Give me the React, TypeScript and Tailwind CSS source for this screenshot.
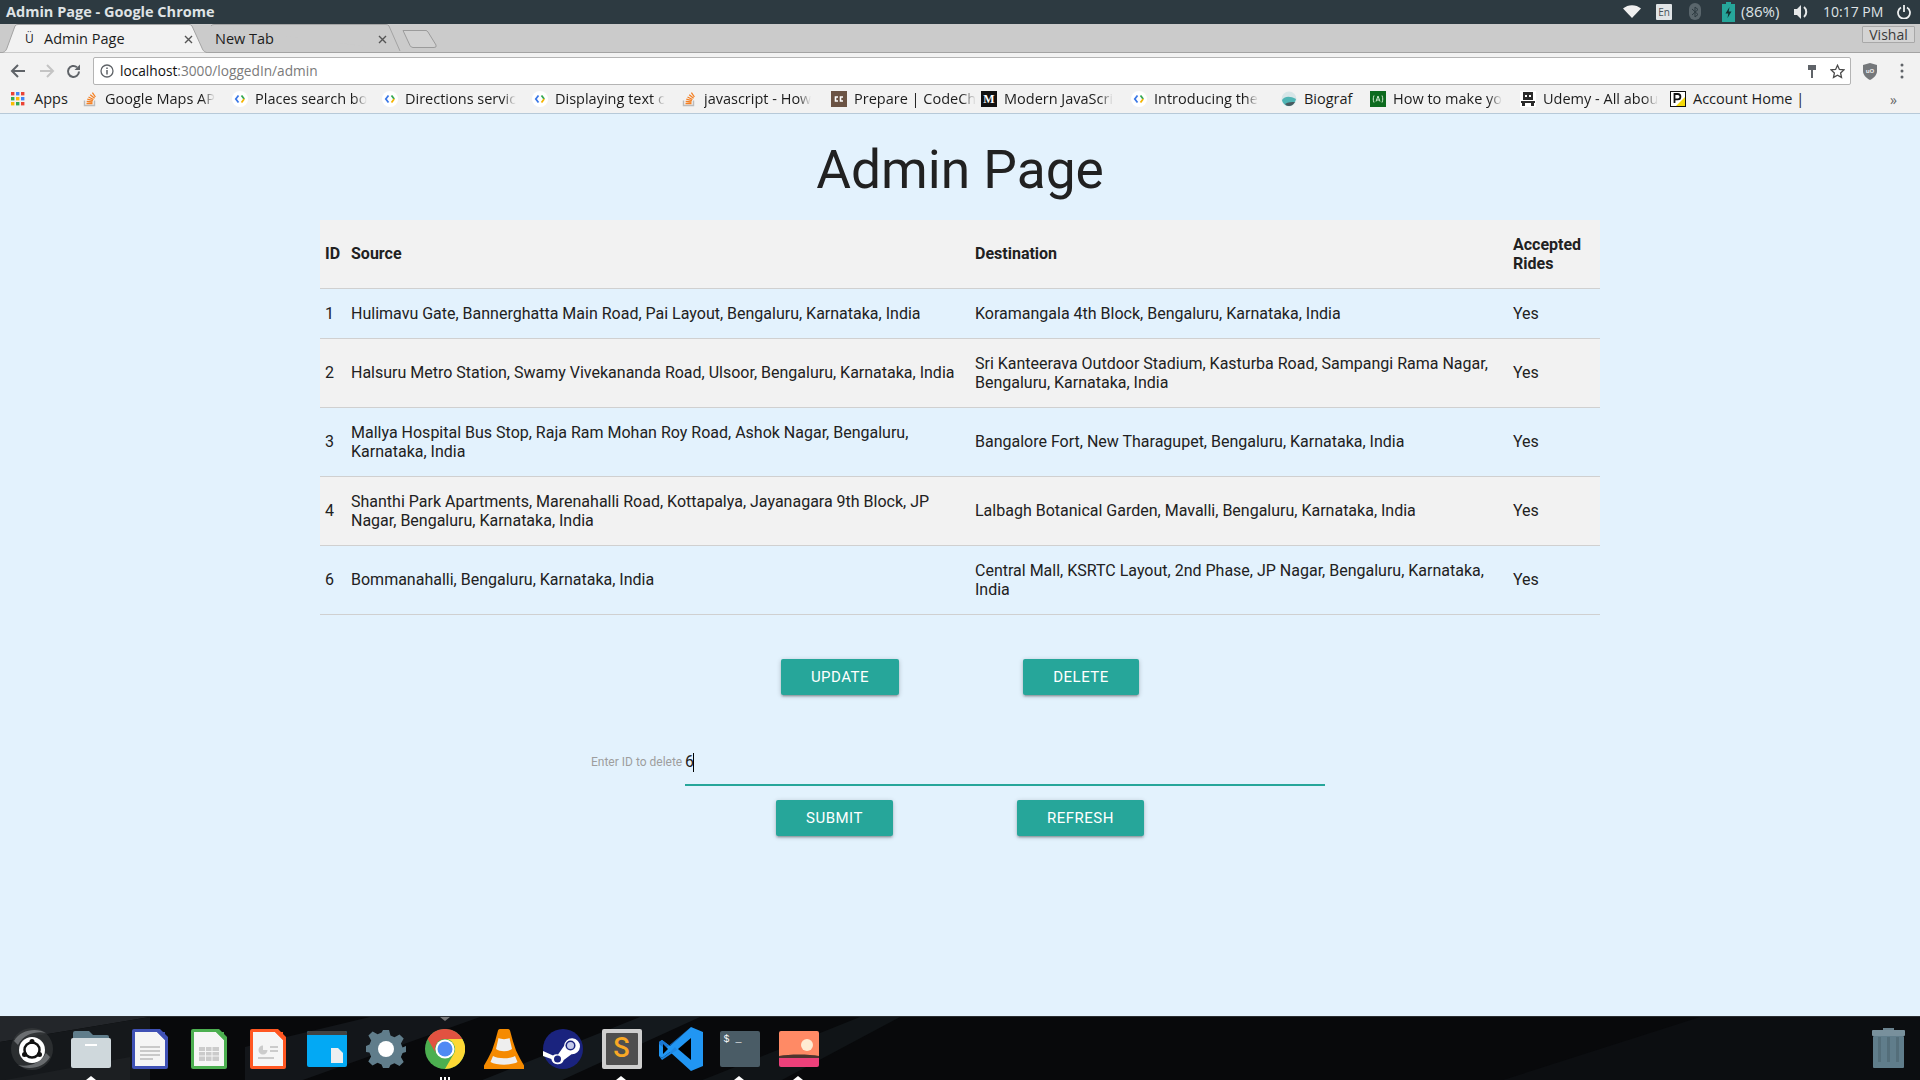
import React from "react";

const Goog = () => (
  <svg width="16" height="16" viewBox="0 0 16 16" className="shrink-0">
    <circle cx="8" cy="8" r="8" fill="#fff" />
    <path d="M6.500 4.500 L3.800 8 L6.500 11.500" fill="none" stroke="#3b78e7" strokeWidth="1.800" />
    <path d="M9.500 4.500 L12.200 8" fill="none" stroke="#34a853" strokeWidth="1.800" />
    <path d="M12.200 8 L9.500 11.500" fill="none" stroke="#f4b400" strokeWidth="1.800" />
  </svg>
);
const SO = () => (
  <svg width="16" height="16" viewBox="0 0 16 16" className="shrink-0">
    <path d="M2.500 9.500v5h10v-5" fill="none" stroke="#bcbbbb" strokeWidth="1.400" />
    <path d="M4.500 12.500h6M4.700 10.400l5.800.6M5.300 8.200l5.600 1.500M6.500 6l5 2.500M8.200 3.800l4.400 3.400M10.400 1.600l3 4.400" stroke="#f48024" strokeWidth="1.300" fill="none" />
  </svg>
);
const CC = () => (
  <svg width="16" height="16" viewBox="0 0 16 16" className="shrink-0">
    <rect width="16" height="16" fill="#6b5344" />
    <path d="M7 6H4.500v4H7M12 6H9.500v4H12" fill="none" stroke="#fff" strokeWidth="1.600" />
  </svg>
);
const MM = () => (
  <div className="w-4 h-4 shrink-0 bg-[#111] text-white flex items-center justify-center text-[12px] font-bold font-['Liberation_Serif',serif]">M</div>
);
const Bio = () => (
  <svg width="16" height="16" viewBox="0 0 16 16" className="shrink-0">
    <circle cx="8" cy="8" r="7.500" fill="#d7e6e8" />
    <path d="M1 9c3-4 8-4 14-1-1 4-4 7-7 7-3 0-6-2-7-6z" fill="#4fb4b4" />
    <path d="M4 13c3-2 7-2 10-2-2 3-4 4-6 4s-3-1-4-2z" fill="#4a5a60" />
  </svg>
);
const HowIcon = () => (
  <svg width="16" height="16" viewBox="0 0 16 16" className="shrink-0">
    <rect width="16" height="16" fill="#0d6b1f" />
    <path d="M4 4.500C3 7 3 9 4 11.500M12 4.500c1 2.500 1 4.500 0 7M6 10.500 8 5l2 5.500M6.800 9h2.400" fill="none" stroke="#cfe8cf" strokeWidth="1" />
  </svg>
);
const Ud = () => (
  <svg width="16" height="16" viewBox="0 0 16 16" className="shrink-0">
    <rect width="16" height="16" fill="#fff" />
    <path d="M3 1h10v8H3zM1 10h14v2H1zM2 12h3v3H2zM11 12h3v3h-3z" fill="#2a2a2a" />
    <rect x="5" y="4" width="2" height="2" fill="#fff" />
    <rect x="9" y="4" width="2" height="2" fill="#fff" />
  </svg>
);
const PIcon = () => (
  <svg width="16" height="16" viewBox="0 0 16 16" className="shrink-0">
    <rect x=".5" y=".5" width="15" height="15" fill="#fff" stroke="#111" />
    <path d="M15 6v9H6z" fill="#f5d90a" />
    <path d="M4.500 12V3h3.200a2.500 2.500 0 0 1 0 5.400H4.500" fill="none" stroke="#111" strokeWidth="1.800" />
  </svg>
);
const Apps = () => (
  <svg width="14" height="14" viewBox="0 0 14 14" className="shrink-0">
    {[
      [0, 0, "#ea4335"], [5, 0, "#4285f4"], [10, 0, "#ea4335"],
      [0, 5, "#34a853"], [5, 5, "#fbbc05"], [10, 5, "#4285f4"],
      [0, 10, "#fbbc05"], [5, 10, "#34a853"], [10, 10, "#ea4335"],
    ].map(([x, y, c], i) => (
      <rect key={i} x={x as number} y={y as number} width="3.400" height="3.400" fill={c as string} />
    ))}
  </svg>
);

const fade = "[mask-image:linear-gradient(to_right,black_88%,transparent)]";

const bookmarks: [React.ReactNode, string, string, string][] = [
  [<SO />, "Google Maps AP", "w-[150px]", fade],
  [<Goog />, "Places search bo", "w-[150px]", fade],
  [<Goog />, "Directions servic", "w-[150px]", fade],
  [<Goog />, "Displaying text c", "w-[149px]", fade],
  [<SO />, "javascript - How", "w-[150px]", fade],
  [<CC />, "Prepare | CodeCh", "w-[150px]", fade],
  [<MM />, "Modern JavaScri", "w-[150px]", fade],
  [<Goog />, "Introducing the", "w-[150px]", fade],
  [<Bio />, "Biograf", "w-[89px]", ""],
  [<HowIcon />, "How to make yo", "w-[150px]", fade],
  [<Ud />, "Udemy - All abou", "w-[150px]", fade],
  [<PIcon />, "Account Home |", "w-[150px]", ""],
];

const rows: { id: string; src: string; dst: string; one: "src" | "dst" | "both" }[] = [
  { id: "1", src: "Hulimavu Gate, Bannerghatta Main Road, Pai Layout, Bengaluru, Karnataka, India", dst: "Koramangala 4th Block, Bengaluru, Karnataka, India", one: "both" },
  { id: "2", src: "Halsuru Metro Station, Swamy Vivekananda Road, Ulsoor, Bengaluru, Karnataka, India", dst: "Sri Kanteerava Outdoor Stadium, Kasturba Road, Sampangi Rama Nagar, Bengaluru, Karnataka, India", one: "src" },
  { id: "3", src: "Mallya Hospital Bus Stop, Raja Ram Mohan Roy Road, Ashok Nagar, Bengaluru, Karnataka, India", dst: "Bangalore Fort, New Tharagupet, Bengaluru, Karnataka, India", one: "dst" },
  { id: "4", src: "Shanthi Park Apartments, Marenahalli Road, Kottapalya, Jayanagara 9th Block, JP Nagar, Bengaluru, Karnataka, India", dst: "Lalbagh Botanical Garden, Mavalli, Bengaluru, Karnataka, India", one: "dst" },
  { id: "6", src: "Bommanahalli, Bengaluru, Karnataka, India", dst: "Central Mall, KSRTC Layout, 2nd Phase, JP Nagar, Bengaluru, Karnataka, India", one: "src" },
];

const Btn = ({ label, w }: { label: string; w: string }) => (
  <button className={`${w} h-9 rounded-[2px] bg-[#26a69a] text-white text-[15px] tracking-[0.5px] uppercase shadow-[0_2px_2px_0_rgba(0,0,0,0.14),0_3px_1px_-2px_rgba(0,0,0,0.12),0_1px_5px_0_rgba(0,0,0,0.2)]`}>
    {label}
  </button>
);

const dockIcons: React.ReactNode[] = [
  <svg width="44" height="44" viewBox="0 0 44 44">
    <circle cx="22" cy="22" r="21" fill="#3a3d40" opacity=".6" />
    <path d="M4 14C10 3 26 0 36 6 28 4 14 6 8 18zM40 30c-6 11-22 14-32 8 8 2 22 0 28-12z" fill="#9a9ea2" opacity=".55" />
    <circle cx="22" cy="23" r="13" fill="#fff" />
    <circle cx="22" cy="23" r="7.500" fill="none" stroke="#111" strokeWidth="2.500" />
    <circle cx="22" cy="14.500" r="2.500" fill="#111" />
    <circle cx="14.500" cy="27.500" r="2.500" fill="#111" />
    <circle cx="29.500" cy="27.500" r="2.500" fill="#111" />
  </svg>,
  <svg width="40" height="40" viewBox="0 0 40 40">
    <path d="M2 4a2 2 0 0 1 2-2h14l4 4h14a2 2 0 0 1 2 2v6H2z" fill="#607d8b" />
    <rect y="9" width="40" height="30" rx="2" fill="#cfd8dc" />
    <rect x="14" y="15" width="12" height="2" fill="#fff" />
  </svg>,
  <svg width="36" height="40" viewBox="0 0 36 40">
    <path d="M2 0h26l8 8v30a2 2 0 0 1-2 2H2a2 2 0 0 1-2-2V2a2 2 0 0 1 2-2z" fill="#3f51b5" />
    <path d="M3 3h22l8 8v26H3z" fill="#f5f5f5" />
    <path d="M25 3l8 8V3z" fill="#3f51b5" />
    <path d="M8 18h20M8 22h20M8 26h20M8 30h13" stroke="#c9c9c9" strokeWidth="2" />
  </svg>,
  <svg width="36" height="40" viewBox="0 0 36 40">
    <path d="M2 0h26l8 8v30a2 2 0 0 1-2 2H2a2 2 0 0 1-2-2V2a2 2 0 0 1 2-2z" fill="#4caf50" />
    <path d="M3 3h22l8 8v26H3z" fill="#f5f5f5" />
    <path d="M25 3l8 8V3z" fill="#4caf50" />
    <path d="M8 18h20v14H8z" fill="#cbcbcb" />
    <path d="M8 22.500h20M8 27h20M14.500 18v14M21 18v14" stroke="#f5f5f5" strokeWidth="1" />
  </svg>,
  <svg width="36" height="40" viewBox="0 0 36 40">
    <path d="M2 0h26l8 8v30a2 2 0 0 1-2 2H2a2 2 0 0 1-2-2V2a2 2 0 0 1 2-2z" fill="#ff5722" />
    <path d="M3 3h22l8 8v26H3z" fill="#f5f5f5" />
    <path d="M25 3l8 8V3z" fill="#ff5722" />
    <path d="M13 16.500a4.500 4.500 0 1 0 4.500 4.500H13z" fill="#cbcbcb" />
    <path d="M20 18h8M20 22h8M8 29h16" stroke="#cbcbcb" strokeWidth="2" />
  </svg>,
  <svg width="40" height="36" viewBox="0 0 40 36">
    <path d="M2 0h36a2 2 0 0 1 2 2v32a2 2 0 0 1-2 2H2a2 2 0 0 1-2-2V2a2 2 0 0 1 2-2z" fill="#03a9f4" />
    <path d="M2 0h36a2 2 0 0 1 2 2v2H0V2a2 2 0 0 1 2-2z" fill="#424242" />
    <path d="M24 17h7l5 5v10H24z" fill="#eceff1" />
  </svg>,
  <svg width="40" height="40" viewBox="0 0 40 40">
    <path d="M17 1h6l1.500 5.500 4 1.700 5-2.800 4.200 4.200-2.800 5 1.700 4L40 17v6l-3.400.9-1.700 4 2.800 5-4.200 4.200-5-2.800-4 1.700L23 39h-6l-1.500-3.500-4-1.700-5 2.800-4.200-4.200 2.800-5-1.700-4L0 23v-6l3.500-1.400 1.700-4-2.800-5 4.200-4.200 5 2.800 4-1.700z" fill="#607d8b" />
    <circle cx="20" cy="20" r="8" fill="#fff" />
  </svg>,
  <svg width="40" height="40" viewBox="0 0 48 48">
    <circle cx="24" cy="24" r="24" fill="#4caf50" />
    <path d="M44.800 12A24 24 0 0 1 24 48l10.400-18A12 12 0 0 0 24 12z" fill="#fdd835" />
    <path d="M3.200 12A24 24 0 0 1 44.800 12H24a12 12 0 0 0-10.400 18z" fill="#e15241" />
    <circle cx="24" cy="24" r="11.500" fill="#fff" />
    <circle cx="24" cy="24" r="9" fill="#4e8af4" />
  </svg>,
  <svg width="40" height="40" viewBox="0 0 40 40">
    <path d="M16 0h8a2 2 0 0 1 2 1.500l3 11 3 9 4 8 4 7a2 2 0 0 1-2 3.500H2a2 2 0 0 1-2-3.500l4-7 4-8 3-9 3-11A2 2 0 0 1 16 0z" fill="#f58a00" />
    <path d="M14.500 9c3 1.500 8 1.500 11 0l2.500 11c-4 3-12 3-16 0z" fill="#eeeeee" />
    <path d="M9 27c5 3 17 3 22 0l2.500 6c-6 3.500-21 3.500-27 0z" fill="#eeeeee" />
  </svg>,
  <svg width="40" height="40" viewBox="0 0 40 40">
    <circle cx="20" cy="20" r="20" fill="#1a237e" />
    <path d="M0 22l10 4.500c1.500-1.200 3.300-1.500 5-1L21 17a8 8 0 1 1 7.500 8.300l-7.700 5.700a6.500 6.500 0 0 1-12.500-1L0 27z" fill="#fff" />
    <circle cx="27.500" cy="16.500" r="5" fill="#1a237e" />
    <circle cx="27.500" cy="16.500" r="3.500" fill="#c5cae9" />
    <circle cx="14.500" cy="30" r="3.500" fill="#1a237e" />
  </svg>,
  <div className="w-10 h-10 bg-[#cfcfcf] rounded-[2px] p-1 flex">
    <div className="flex-1 bg-[#4f4f4f] rounded-[1px] flex items-center justify-center text-[#f9a825] text-[27px] font-medium leading-none">S</div>
  </div>,
  <svg width="44" height="44" viewBox="0 0 44 44">
    <path d="M32 0l12 5v34l-12 5L11 25 3 31l-3-2V15l3-2 8 6z" fill="#2196f3" />
    <path d="M32 11L19 22l13 11z" fill="#000" />
    <path d="M32 0L11 19 3 13 0 15v2l6 5 26-22z" fill="#1976d2" />
    <path d="M3 31l8-6 5-5 2 3-15 10-3-4z" fill="#1e88e5" />
    <path d="M4 17l5 5-5 5z" fill="#000" />
  </svg>,
  <div className="w-10 h-9 bg-[#4a5c66] rounded-[2px] pl-1 text-white text-[10px] leading-none font-['Liberation_Mono',monospace] pt-1">$ _</div>,
  <svg width="40" height="36" viewBox="0 0 40 36">
    <path d="M2 0h36a2 2 0 0 1 2 2v24H0V2a2 2 0 0 1 2-2z" fill="#ff8a65" />
    <circle cx="28" cy="14" r="6" fill="#ffecd2" />
    <path d="M0 25c10-2 30-2 40 0v3H0z" fill="#4e342e" />
    <path d="M0 27h40v7a2 2 0 0 1-2 2H2a2 2 0 0 1-2-2z" fill="#ec407a" />
  </svg>,
];

const Tri = ({ className }: { className: string }) => (
  <div className={`absolute w-0 h-0 border-x-[5px] border-x-transparent ${className}`} />
);

export default function App() {
  return (
    <div className="h-screen w-full flex flex-col overflow-hidden bg-[#e3f2fd] font-['Roboto',sans-serif] text-[#212121]">
      {/* system bar */}
      <div className="h-6 bg-[#2d3a41] flex items-center shrink-0 pb-[1px] text-[#dfe3e5] font-['Open_Sans',sans-serif]">
        <div className="pl-[6px] text-[14.5px] font-bold flex-1">Admin Page - Google Chrome</div>
        <svg width="18" height="13" viewBox="0 0 18 13" className="mr-[15px]"><path d="M0 3.500C5-1 13-1 18 3.500L9 13z" fill="#f0f0f0" /></svg>
        <div className="w-4 h-4 bg-[#e0e4e6] rounded-[1px] text-[#47535a] text-[10px] leading-4 text-center mr-[17px]">En</div>
        <div className="w-3 h-[17px] bg-[#5a666c] rounded-full mr-[21px] text-[#2d3a41] flex items-center justify-center">
          <svg width="8" height="12" viewBox="0 0 8 12"><path d="M1 3l6 5.500L4 11V1l3 2.500L1 9" fill="none" stroke="#2d3a41" /></svg>
        </div>
        <svg width="13" height="20" viewBox="0 0 13 20" className="mr-[6px]">
          <path d="M4 0h5v2h4v18H0V2h4z" fill="#26a69a" />
          <path d="M7.500 5L3.500 11.500h2.800L5.500 16l4-6.500H6.700z" fill="#10302e" />
        </svg>
        <div className="text-[15px] w-[42px] mr-[11px] whitespace-nowrap">(86%)</div>
        <svg width="16" height="16" viewBox="0 0 16 16" className="mr-[13px]">
          <path d="M0 5h3l4-4v14l-4-4H0z" fill="#e6e8e9" />
          <path d="M10 3c3 2.500 3 7.500 0 10" fill="none" stroke="#e6e8e9" strokeWidth="2" />
        </svg>
        <div className="text-[14px] w-[62px] whitespace-nowrap mr-[12px]">10:17 PM</div>
        <svg width="14" height="14" viewBox="0 0 14 14" className="mr-[9px]">
          <path d="M4 2.500a6 6 0 1 0 6 0M7 0v7" fill="none" stroke="#eef0f1" strokeWidth="1.800" />
        </svg>
      </div>

      {/* tab strip */}
      <div className="h-[29px] shrink-0 bg-[#cbcbcb] border-b border-[#a3a3a3] relative flex font-['Open_Sans',sans-serif] text-[14.5px] text-[#1c1c1c]">
        <div className="relative w-[212px] ml-[-1px] pl-[26px] pt-[1px] flex items-center">
          <svg className="absolute inset-0" width="212" height="29" viewBox="0 0 212 29">
            <path d="M0 29C5 29 7 27 8 24L16 2Q17 .500 19 .500H190Q192 .500 193 2L203 24C204 27 206 29 212 29z" fill="#f2f2f2" stroke="#a3a3a3" />
          </svg>
          <span className="relative w-[19px] text-[12px]">Ü</span>
          <span className="relative">Admin Page</span>
          <svg className="absolute left-[185px] top-[11px]" width="9" height="9" viewBox="0 0 9 9"><path d="M1 1l7 7M8 1L1 8" stroke="#555" strokeWidth="1.400" /></svg>
        </div>
        <div className="relative w-[196px] ml-[-1px] pl-[5px] pt-[1px] flex items-center">
          <svg className="absolute inset-0" width="196" height="29" viewBox="0 0 196 29">
            <path d="M1 2Q2 .500 4 .500H176Q178 .500 179 2L190 27" fill="#cbcbcb" stroke="#a3a3a3" />
          </svg>
          <span className="relative">New Tab</span>
          <svg className="absolute left-[168px] top-[11px]" width="9" height="9" viewBox="0 0 9 9"><path d="M1 1l7 7M8 1L1 8" stroke="#555" strokeWidth="1.400" /></svg>
        </div>
        <svg width="36" height="18" viewBox="0 0 36 18" className="ml-[-4px] mt-[6px]">
          <path d="M1 .500H24Q25 .500 26 2L34 15Q35 17.500 32 17.500H11Q9 17.500 8 15.500z" fill="#d1d1d1" stroke="#9b9b9b" />
        </svg>
        <div className="absolute right-[5px] top-[2px] w-[53px] h-[17px] border border-[#a8a8a8] rounded-[1px] bg-[#d4d4d4] text-center text-[14px] leading-[15px] text-[#3a3a3a]">Vishal</div>
      </div>

      {/* toolbar */}
      <div className="h-[36px] shrink-0 bg-[#f2f2f2] flex items-center font-['Open_Sans',sans-serif]">
        <div className="w-[93px] flex items-center pl-[10px] gap-[13px]">
          <svg width="16" height="14" viewBox="0 0 16 14"><path d="M15 7H2M8 1L2 7l6 6" fill="none" stroke="#5f6368" strokeWidth="2" /></svg>
          <svg width="16" height="14" viewBox="0 0 16 14"><path d="M1 7h13M8 1l6 6-6 6" fill="none" stroke="#c4c4c4" strokeWidth="2" /></svg>
          <svg width="15" height="15" viewBox="0 0 15 15" className="ml-[-2px]"><path d="M13 7.500A5.500 5.500 0 1 1 11 3.200" fill="none" stroke="#5f6368" strokeWidth="2" /><path d="M14 .500v5.500H8.500z" fill="#5f6368" /></svg>
        </div>
        <div className="w-[1758px] h-[28px] bg-white border border-[#b4b4b4] rounded-[2px] flex items-center pl-[6px] pr-[5px]">
          <svg width="14" height="14" viewBox="0 0 14 14" className="shrink-0 mr-[6px]">
            <circle cx="7" cy="7" r="6" fill="none" stroke="#5f6368" strokeWidth="1.300" />
            <path d="M7 6v4.500M7 3.500v1.400" stroke="#5f6368" strokeWidth="1.500" />
          </svg>
          <div className="text-[13.7px] flex-1"><span className="text-[#111]">localhost</span><span className="text-[#7a7a7a]">:3000/loggedIn/admin</span></div>
          <svg width="10" height="14" viewBox="0 0 10 14" className="mr-[13px]"><path d="M1 1h8v5H6v8H4V6H1z" fill="#5f6368" /></svg>
          <svg width="15" height="15" viewBox="0 0 15 15"><path d="M7.500 1.300l1.900 4.100 4.500.5-3.300 3 .9 4.500-4-2.200-4 2.200.9-4.500-3.300-3 4.500-.5z" fill="none" stroke="#4a4a4a" strokeWidth="1.300" /></svg>
        </div>
        <svg width="14" height="17" viewBox="0 0 14 17" className="ml-[12px]">
          <path d="M7 0l7 2v6c0 4-3 7-7 9-4-2-7-5-7-9V2z" fill="#75787b" />
          <text x="7" y="9.500" fontSize="6" fill="#eee" textAnchor="middle" fontWeight="bold">uO</text>
        </svg>
        <svg width="4" height="16" viewBox="0 0 4 16" className="ml-[23px]"><circle cx="2" cy="2" r="1.500" fill="#5f6368" /><circle cx="2" cy="8" r="1.500" fill="#5f6368" /><circle cx="2" cy="14" r="1.500" fill="#5f6368" /></svg>
      </div>

      {/* bookmarks */}
      <div className="h-[25px] shrink-0 bg-[#f2f2f2] border-b border-[#b7c9d8] flex items-center pl-[11px] pb-[4px] font-['Open_Sans',sans-serif] text-[14.5px] text-[#1c1c1c] relative">
        <div className="w-[71px] flex items-center gap-[9px]"><Apps /><span>Apps</span></div>
        {bookmarks.map(([icon, label, w, mask], i) => (
          <div key={i} className={`${w} flex items-center gap-[7px] shrink-0`}>
            {icon}
            <span className={`whitespace-nowrap ${mask}`}>{label}</span>
          </div>
        ))}
        <span className="ml-auto mr-[23px] text-[#666] text-[14px]">»</span>
      </div>

      {/* page */}
      <main className="flex-1 flex flex-col items-center min-h-0">
        <h1 className="text-[53.3px] leading-[62px] mt-[25px] mb-[19px]">Admin Page</h1>
        <table className="w-[1280px] table-fixed border-collapse text-[16px] leading-[19px]">
          <colgroup>
            <col className="w-[26px]" />
            <col className="w-[624px]" />
            <col className="w-[538px]" />
            <col className="w-[92px]" />
          </colgroup>
          <thead>
            <tr className="bg-[#f2f2f2] border-b border-[#d0d0d0]">
              <th className="pl-[5px] pt-[15px] pb-[16px] text-left font-bold whitespace-nowrap">ID</th>
              <th className="px-[5px] pt-[15px] pb-[16px] text-left font-bold">Source</th>
              <th className="px-[5px] pt-[15px] pb-[16px] text-left font-bold">Destination</th>
              <th className="px-[5px] py-[15px] text-left font-bold">Accepted Rides</th>
            </tr>
          </thead>
          <tbody>
            {rows.map((r, i) => {
              const single = i === 0 ? "py-[15px]" : "pt-[15px] pb-[16px]";
              return (
                <tr key={r.id} className={`border-b border-[#d0d0d0] ${i % 2 === 1 ? "bg-[#f2f2f2]" : ""}`}>
                  <td className={`pl-[5px] ${single}`}>{r.id}</td>
                  <td className={`px-[5px] ${r.one === "dst" ? "py-[15px]" : single}`}>{r.src}</td>
                  <td className={`px-[5px] ${r.one === "src" ? "py-[15px]" : single}`}>{r.dst}</td>
                  <td className={`px-[5px] ${single}`}>Yes</td>
                </tr>
              );
            })}
          </tbody>
        </table>

        <div className="flex justify-center gap-[124px] mt-[44px]">
          <Btn label="Update" w="w-[118px]" />
          <Btn label="Delete" w="w-[116px]" />
        </div>

        <div className="flex items-start mt-[45px] w-[734px] ml-[-4px]">
          <label className="w-[94px] text-[12px] leading-[44px] text-[#9e9e9e] whitespace-nowrap">Enter ID to delete</label>
          <div className="relative w-[640px] h-[46px] border-b-2 border-[#26a69a] text-[16px] leading-[44px]">
            6
            <span className="absolute left-[8px] top-[13px] w-px h-[19px] bg-black" />
          </div>
        </div>

        <div className="flex justify-center gap-[124px] mt-[14px]">
          <Btn label="Submit" w="w-[117px]" />
          <Btn label="Refresh" w="w-[127px]" />
        </div>
      </main>

      {/* dock */}
      <div className="h-[64px] shrink-0 bg-[#08090b] border-t border-[#2a2d30] relative flex items-start overflow-hidden">
        <svg className="absolute inset-0" width="1920" height="64" viewBox="0 0 1920 64">
          <path d="M0 25L150 0H0z" fill="#23262a" />
          <path d="M0 64V25L150 0V64z" fill="#15181b" />
          <path d="M245 64V30L370 0H480L300 64z" fill="#13161a" />
          <path d="M480 64L640 0H700L560 64z" fill="#14191d" />
          <path d="M700 64L860 0H900L780 64z" fill="#101417" />
          <path d="M0 64L130 40V64z" fill="#1c1f22" />
          <path d="M1500 64L1700 0H1920V64z" fill="#0c0e11" />
        </svg>
        <div className="relative flex pl-[2px]">
          {dockIcons.map((ic, i) => (
            <div key={i} className="w-[59px] h-[63px] flex items-center justify-center">{ic}</div>
          ))}
        </div>
        <div className="relative ml-auto mr-[15px] mt-[11px]">
          <svg width="33" height="41" viewBox="0 0 33 41">
            <rect x="11" y="0" width="11" height="4" fill="#6a828e" />
            <rect y="2" width="33" height="6" rx="1" fill="#78909c" />
            <rect x="1" y="8" width="31" height="32" rx="1" fill="#607d8b" />
            <path d="M7.500 9v25M16.500 9v25M25.500 9v25" stroke="#546e7a" strokeWidth="3" />
          </svg>
        </div>
        <Tri className="left-[86px] bottom-0 border-b-[4px] border-b-white" />
        <Tri className="left-[440px] top-0 border-t-[4px] border-t-[#777]" />
        <div className="absolute left-[440px] bottom-0 flex gap-[2px]">
          <span className="w-[2px] h-[3px] bg-white" />
          <span className="w-[2px] h-[3px] bg-white" />
          <span className="w-[2px] h-[3px] bg-white" />
        </div>
        <Tri className="left-[616px] bottom-0 border-b-[4px] border-b-white" />
        <Tri className="left-[734px] bottom-0 border-b-[4px] border-b-white" />
        <Tri className="left-[793px] bottom-0 border-b-[4px] border-b-white" />
      </div>
    </div>
  );
}
